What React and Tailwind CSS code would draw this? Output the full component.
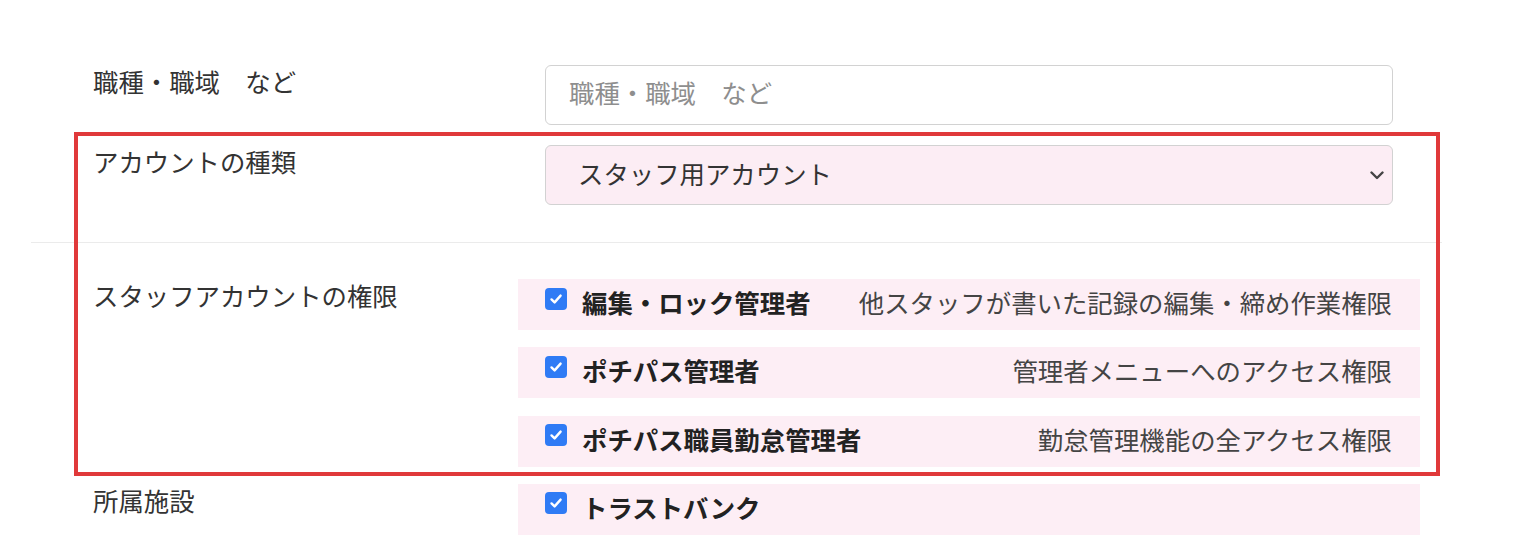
import React from 'react';

const font = { fontFamily: '"Noto Sans CJK JP", "Noto Sans", sans-serif' };

const permissions = [
  { id: 'edit', label: '編集・ロック管理者', desc: '他スタッフが書いた記録の編集・締め作業権限' },
  { id: 'admin', label: 'ポチパス管理者', desc: '管理者メニューへのアクセス権限' },
  { id: 'attendance', label: 'ポチパス職員勤怠管理者', desc: '勤怠管理機能の全アクセス権限' },
];

const CheckBox = () => (
  <span className="w-[22px] h-[22px] mb-[7px] rounded-[4px] bg-[#2f7bf5] flex items-center justify-center shrink-0">
    <svg width="14" height="14" viewBox="0 0 14 14" fill="none">
      <path d="M2.5 7.4 L5.6 10.4 L11.6 3.6" stroke="#fff" strokeWidth="2.4" strokeLinecap="round" strokeLinejoin="round" />
    </svg>
  </span>
);

const CheckRow = ({ label, desc }) => (
  <div className="h-[51px] -mx-[27px] pl-[27px] pr-[28px] pb-[5px] bg-[#fdeef5] flex items-center">
    <CheckBox />
    <span className="ml-[15px] font-bold text-[#222]">{label}</span>
    {desc && <span className="ml-auto text-[#444]">{desc}</span>}
  </div>
);

const FormRow = ({ label, children, className = '' }) => (
  <div className={`flex pl-[62px] pr-[49px] ${className}`}>
    <div className="w-[452px] leading-[32px] text-[#333]">{label}</div>
    <div className="w-[848px]">{children}</div>
  </div>
);

export default function App() {
  return (
    <div className="relative h-[560px] bg-white pt-[65px] text-[25.4px]" style={font}>
      <div className="ml-[31px] w-[1411px]">
        <FormRow label="職種・職域　など">
          <div className="h-[60px] rounded-[6px] border border-[#d2d2d2] flex items-center pl-[23px] pb-[5px] text-[#8e8e8e]">
            職種・職域　など
          </div>
        </FormRow>

        <FormRow label="アカウントの種類" className="mt-5">
          <div className="h-[60px] rounded-[6px] border border-[#d2d2d2] bg-[#fcedf4] flex items-center pl-[32px] pr-[8px] pb-[3px] text-[#333]">
            <span>スタッフ用アカウント</span>
            <svg className="ml-auto mt-[3px]" width="14" height="9" viewBox="0 0 14 9" fill="none">
              <path d="M1.5 1.5 L7 7 L12.5 1.5" stroke="#444" strokeWidth="2.4" strokeLinecap="round" strokeLinejoin="round" />
            </svg>
          </div>
        </FormRow>

        <div className="mt-[37px] border-t border-[#ebebeb]" />

        <FormRow label="スタッフアカウントの権限" className="mt-[36px]">
          <div className="flex flex-col gap-[17.3px]">
            {permissions.map(p => (
              <CheckRow key={p.id} label={p.label} desc={p.desc} />
            ))}
          </div>
        </FormRow>

        <FormRow label="所属施設" className="mt-[17.3px]">
          <CheckRow label="トラストバンク" />
        </FormRow>
      </div>

      {/* highlight frame around the account settings */}
      <div className="absolute left-[74px] top-[132px] w-[1366px] h-[344px] border-4 border-[#e0393a] pointer-events-none" />
    </div>
  );
}
